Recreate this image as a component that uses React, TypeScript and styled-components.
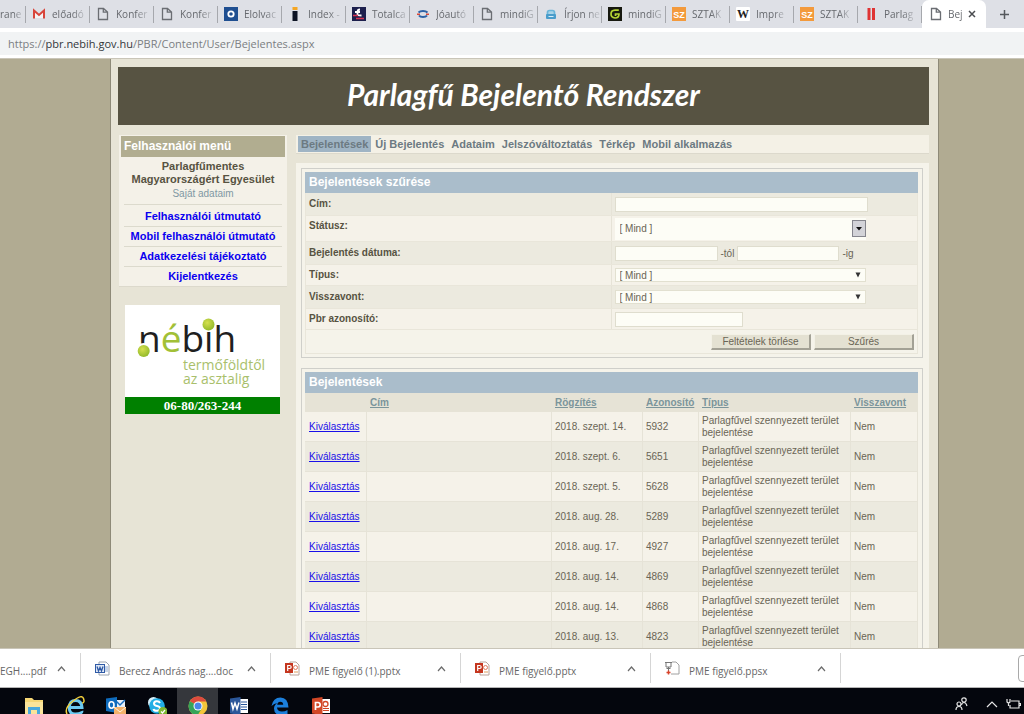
import React from "react";
import styled, { createGlobalStyle, css } from "styled-components";

const GlobalStyle = createGlobalStyle`
  *, *::before, *::after { box-sizing: border-box; }
  body { margin: 0; background: #b1ab92; }
  button, input, select { font: inherit; color: inherit; margin: 0; }
`;

const SANS = `"Liberation Sans", Arial, sans-serif`;
const CHROME = `"Open Sans", "Noto Sans", sans-serif`;

const Window = styled.div`
  display: flex;
  flex-direction: column;
  height: 100vh;
  overflow: hidden;
  font-family: ${CHROME};
`;

/* ---------- browser tabs ---------- */

const TabStrip = styled.nav`
  display: flex;
  flex: none;
  height: 28px;
  background: #dee0e6;
  overflow: hidden;
`;

const Tab = styled.button<{ $active?: boolean; $cut?: boolean }>`
  display: flex;
  align-items: center;
  flex: none;
  width: ${(p) => (p.$cut ? 26 : 64)}px;
  height: 28px;
  padding: 0 0 0 ${(p) => (p.$cut ? 0 : 6)}px;
  border: 0;
  background: transparent;
  color: #66696e;
  font-size: 10px;
  line-height: 16px;
  gap: 6px;
  ${(p) =>
    p.$active
      ? css`
          background: #fff;
          border-radius: 7px 7px 0 0;
          padding-left: 7px;
          gap: 5px;
        `
      : css`
          &::after {
            content: "";
            flex: none;
            width: 1px;
            height: 17px;
            margin-left: auto;
            background: #a6a8ad;
          }
        `}
`;

const TabLabel = styled.span<{ $short?: boolean }>`
  max-width: 36px;
  flex: none;
  margin-right: -6px;
  padding-right: ${(p) => (p.$short ? 6 : 2)}px;
  text-align: left;
  white-space: nowrap;
  mask-image: linear-gradient(to right, #000 60%, rgba(0, 0, 0, 0.15));
`;

const TabIcon = styled.svg`
  flex: none;
  width: 14px;
  height: 14px;
`;

const NewTab = styled.button`
  width: 36px;
  padding: 0;
  border: 0;
  background: transparent;
  display: grid;
  place-items: center;
`;

const AddressBar = styled.div`
  flex: none;
  height: 31px;
  padding: 4px 0;
  background: #fff;
  border-bottom: 1px solid #c9c5b8;
`;

const AddressField = styled.div`
  height: 23px;
  padding-left: 8px;
  background: #f1f3f4;
  color: #7b7e82;
  font-size: 11px;
  line-height: 23px;
  white-space: nowrap;
  b {
    font-weight: 400;
    color: #33363a;
  }
`;

/* ---------- page ---------- */

const Viewport = styled.main`
  flex: 1;
  min-height: 0;
  overflow: hidden;
  padding: 0 85px 0 110px;
  background: #b1ab92;
  font-family: ${SANS};
  font-size: 10px;
  color: #6a6555;
`;

const Sheet = styled.div`
  padding: 8px 9px 8px 7px;
  border-left: 1px solid #8e8a78;
  border-right: 1px solid #8e8a78;
  background: #e7e4d6;
`;

const Banner = styled.header`
  height: 58px;
  display: grid;
  place-items: center;
  background: #575342;
  margin-bottom: 10px;
  h1 {
    margin: 0;
    color: #fff;
    font: italic 700 30px/36px Lato, sans-serif;
    padding-bottom: 4px;
  }
`;

const Columns = styled.div`
  display: flex;
  align-items: flex-start;
  gap: 9px;
`;

const Sidebar = styled.aside`
  flex: none;
  width: 169px;
  padding-left: 1px;
`;

const MenuBox = styled.section`
  padding: 1px 2px 0;
  background: #f4f1e8;
  border-bottom: 1px solid #dcd9cc;
  text-align: center;
`;

const MenuTitle = styled.h2`
  margin: 0;
  padding-left: 3px;
  background: #b1ad90;
  color: #fff;
  font-size: 12px;
  line-height: 21px;
  text-align: left;
`;

const UserBlock = styled.div`
  margin: 0 3px;
  padding: 3px 0;
  border-bottom: 1px solid #dcdacd;
  strong {
    display: block;
    font-size: 11px;
    line-height: 13px;
    color: #575342;
  }
  a {
    display: block;
    color: #8198a3;
    line-height: 15px;
    text-decoration: none;
  }
`;

const MenuLinks = styled.ul`
  list-style: none;
  margin: 0 3px;
  padding: 2px 0 0;
  li + li {
    border-top: 1px solid #dcdacd;
  }
  a {
    display: block;
    color: #0a00f0;
    font-size: 11px;
    font-weight: 700;
    line-height: 19px;
    text-decoration: none;
  }
`;

const LogoCard = styled.figure`
  width: 155px;
  margin: 18px 0 0 6px;
  background: #fff;
  svg {
    display: block;
    width: 155px;
    height: 92px;
  }
  figcaption {
    background: #008000;
    color: #fff;
    text-align: center;
    font: 700 13px/17px "Liberation Serif", "Times New Roman", serif;
  }
`;

const Content = styled.div`
  flex: 1;
  min-width: 0;
`;

const SiteNav = styled.nav`
  display: flex;
  gap: 1px;
  padding: 1px 2px;
  margin-bottom: 9px;
  background: #f4f1e6;
  border-bottom: 1px solid #dcd9cc;
`;

const NavLink = styled.a<{ $current?: boolean }>`
  padding: 0 3px;
  font-size: 11px;
  font-weight: 700;
  line-height: 16px;
  color: #6c7a82;
  text-decoration: none;
  white-space: nowrap;
  background: ${(p) => (p.$current ? "#9fb4c4" : "transparent")};
`;

const Panel = styled.div`
  display: flex;
  flex-direction: column;
  gap: 10px;
  padding: 5px 6px 5px 5px;
  background: #f5f3ea;
`;

const Box = styled.section`
  padding: 3px 4px 3px 3px;
  border: 1px solid #cfcfca;
`;

const BoxTitle = styled.h2`
  margin: 0;
  padding-left: 4px;
  background: #aabdcb;
  color: #fff;
  font-size: 12px;
  line-height: 21px;
`;

/* ---------- filter form ---------- */

const FormRow = styled.div<{ $shade?: boolean; $tall?: boolean }>`
  display: grid;
  grid-template-columns: 1fr 1fr;
  height: ${(p) => (p.$tall ? 26 : p.$shade ? 23 : 21)}px;
  background: ${(p) => (p.$shade ? "#eceadf" : "#f5f2e9")};
  border: solid #e9e6da;
  border-width: 0 1px 1px;
  label {
    padding: ${(p) => (p.$shade ? 5 : 4)}px 3px 0;
    border-right: 1px solid #e6e3d7;
    color: #575342;
    font-weight: 700;
    line-height: 12px;
  }
`;

const Field = styled.div`
  display: flex;
  align-items: center;
  gap: 3px;
  padding: 0 3px;
`;

const TextInput = styled.input<{ $w: number }>`
  width: ${(p) => p.$w}px;
  height: 15px;
  padding: 0 4px;
  border: 1px solid #dfddce;
  background: #fdfdf6;
`;

const SelectWrap = styled.div<{ $combo?: boolean }>`
  position: relative;
  width: 251px;
  select {
    display: block;
    appearance: none;
    width: 100%;
    height: ${(p) => (p.$combo ? 22 : 14)}px;
    border: ${(p) => (p.$combo ? 0 : "1px solid #e2e0d0")};
    padding: 0 4px 0 ${(p) => (p.$combo ? 5 : 4)}px;
    background: #fdfdf6;
    border-radius: 0;
  }
  svg {
    position: absolute;
    pointer-events: none;
    right: ${(p) => (p.$combo ? 0 : 5)}px;
    top: ${(p) => (p.$combo ? 2 : 4)}px;
  }
`;

const Actions = styled.div`
  display: flex;
  justify-content: flex-end;
  gap: 3px;
  padding: 4px 3px 3px;
  border: solid #e9e6da;
  border-width: 0 1px 1px;
`;

const PushButton = styled.button`
  width: 100px;
  height: 16px;
  padding: 0;
  line-height: 12px;
  background: #e4e1d2;
  border: solid;
  border-color: #f3f1e6 #a3a195 #a3a195 #f3f1e6;
  border-width: 1px 2px 2px 1px;
`;

/* ---------- report table ---------- */

const Reports = styled.table`
  width: 100%;
  table-layout: fixed;
  border-collapse: separate;
  border-spacing: 0;
  line-height: 12px;
  th {
    height: 19px;
    padding: 0 3px;
    background: #e6e3d6;
    text-align: left;
  }
  th a {
    color: #7b959b;
  }
  td {
    height: 30px;
    padding: 0 4px 0 3px;
    vertical-align: middle;
    border: solid #e6e3d7;
    border-width: 0 1px 1px 0;
    background: #f5f2e9;
  }
  th:first-child,
  td:first-child {
    padding-left: 4px;
  }
  tbody tr:nth-child(even) td {
    background: #eceadf;
  }
  td a {
    color: #1a10e8;
  }
`;

/* ---------- download shelf and taskbar ---------- */

const Shelf = styled.footer`
  display: flex;
  flex: none;
  align-items: center;
  height: 40px;
  overflow: hidden;
  background: #fff;
  border-top: 1px solid #c9c5b8;
  border-bottom: 1px solid #b5b5b5;
`;

const Download = styled.button<{ $cut?: boolean }>`
  display: flex;
  flex: none;
  align-items: center;
  width: ${(p) => (p.$cut ? 81 : 190)}px;
  height: 30px;
  padding: 6px 14px 0 ${(p) => (p.$cut ? 0 : 14)}px;
  gap: 9px;
  border: 0;
  border-right: 1px solid #d5d5d5;
  background: transparent;
  color: #666;
  font-size: 10px;
  line-height: 16px;
  white-space: nowrap;
  > svg:last-child {
    margin: 0 0 4px auto;
  }
`;

const FileGlyph = styled.svg`
  flex: none;
  width: 15px;
  height: 15px;
  margin-bottom: 5px;
`;

const ShowAll = styled.button`
  flex: none;
  width: 90px;
  height: 27px;
  margin: 0 -84px 0 auto;
  border: 1px solid #a9a9a9;
  border-radius: 4px;
  background: #fff;
`;

const Taskbar = styled.footer`
  display: flex;
  flex: none;
  height: 26px;
  padding: 0 0 0 13px;
  overflow: hidden;
  background: #04060d;
`;

const TaskButton = styled.button<{ $active?: boolean }>`
  flex: none;
  display: flex;
  justify-content: center;
  align-items: flex-start;
  width: 41px;
  height: 34px;
  padding: 8px 0 0;
  border: 0;
  background: ${(p) => (p.$active ? "#35373c" : "transparent")};
  svg {
    width: 20px;
    height: 20px;
  }
`;

const Tray = styled.div`
  display: flex;
  align-items: flex-start;
  gap: 8px;
  margin-left: auto;
  padding: 9px 3px 0 0;
  svg:first-child {
    margin-right: 10px;
  }
`;

/* ---------- drawings ---------- */

const DocIcon = () => (
  <TabIcon viewBox="0 0 14 14" fill="none" stroke="#6b6e73" strokeWidth="1.3">
    <path d="M2.500 1.500h5L11.500 5v7.500h-9zM7.300 1.700v3.500h4" />
  </TabIcon>
);

const SzIcon = () => (
  <TabIcon viewBox="0 0 14 14">
    <rect width="14" height="14" fill="#f39a3c" />
    <text x="7" y="10.500" textAnchor="middle" fontFamily="Liberation Sans" fontWeight="700" fontSize="9" fill="#fff">SZ</text>
  </TabIcon>
);

const MindigIcon = () => (
  <TabIcon viewBox="0 0 14 14">
    <rect width="14" height="14" fill="#17190f" />
    <path d="M10.800 3.200H7Q3 3.500 3 7t4 4q4 0 4-4H7.500v2" fill="none" stroke="#b4d334" strokeWidth="1.700" />
  </TabIcon>
);

const tabs: { label: string; icon: React.ReactNode }[] = [
  {
    label: "előadó",
    icon: (
      <TabIcon viewBox="0 0 14 14">
        <path d="M2.500 11V4L7 8l4.500-4v7" fill="#f4f4f4" />
        <path d="M2 11.500V3.500L7 8l5-4.500v8" fill="none" stroke="#d8453b" strokeWidth="2" />
      </TabIcon>
    ),
  },
  { label: "Konfer", icon: <DocIcon /> },
  { label: "Konfer", icon: <DocIcon /> },
  {
    label: "Elolvac",
    icon: (
      <TabIcon viewBox="0 0 14 14">
        <rect width="14" height="14" fill="#1f4f91" />
        <circle cx="7" cy="7" r="2.700" fill="none" stroke="#fff" strokeWidth="1.800" />
      </TabIcon>
    ),
  },
  {
    label: "Index -",
    icon: (
      <TabIcon viewBox="0 0 14 14">
        <path d="M4.500 0h5v3h-5z" fill="#f5a623" />
        <path d="M4.500 4h5v10h-5z" fill="#0d1424" />
      </TabIcon>
    ),
  },
  {
    label: "Totalca",
    icon: (
      <TabIcon viewBox="0 0 14 14">
        <rect width="14" height="14" fill="#1c1f4d" />
        <path d="M8 2.500Q5.500 2.500 5.500 5v2.500q0 1 4 1M3 5h5" fill="none" stroke="#fff" strokeWidth="1.800" />
        <path d="M1 8.500h5M4 11.500h8" stroke="#d93452" strokeWidth="1.500" />
      </TabIcon>
    ),
  },
  {
    label: "Jóautó",
    icon: (
      <TabIcon viewBox="0 0 14 14" fill="none" strokeWidth="2">
        <path d="M2.500 5.500Q4 4 7 4t4.500 1.500M3 8.500Q4 10 7 10t4-1.500" stroke="#2d62a5" />
        <path d="M1 7.200h3M10 7.200h3" stroke="#d84a3c" strokeWidth="1.500" />
      </TabIcon>
    ),
  },
  { label: "mindiG", icon: <DocIcon /> },
  {
    label: "Írjon ne",
    icon: (
      <TabIcon viewBox="0 0 14 14">
        <path d="M3.500 8V5.500q0-2 2-2h3q2 0 2 2V8" fill="#a9d4e8" stroke="#69b5d9" strokeWidth="1.700" />
        <rect x="2" y="7" width="10" height="5" rx="1" fill="#4a9dcb" />
        <path d="M4.500 9.500h5" stroke="#d9eef7" />
      </TabIcon>
    ),
  },
  { label: "mindiG", icon: <MindigIcon /> },
  { label: "SZTAK", icon: <SzIcon /> },
  {
    label: "Impre",
    icon: (
      <TabIcon viewBox="0 0 14 14">
        <rect width="14" height="14" rx="1" fill="#fff" />
        <text x="7" y="11" textAnchor="middle" fontFamily="Liberation Serif" fontWeight="700" fontSize="12" fill="#222">W</text>
      </TabIcon>
    ),
  },
  { label: "SZTAK", icon: <SzIcon /> },
  {
    label: "Parlag",
    icon: (
      <TabIcon viewBox="0 0 14 14">
        <path d="M3.500 1h3v12h-3zM8 1h3v12H8z" fill="#df3434" />
      </TabIcon>
    ),
  },
];

const Chevron = () => (
  <svg width="9" height="6" viewBox="0 0 9 6" fill="none" stroke="#6b6b6b" strokeWidth="1.200" aria-hidden="true">
    <path d="M1 5l3.500-4L8 5" />
  </svg>
);

const WordFile = () => (
  <FileGlyph viewBox="0 0 15 15">
    <path d="M4 1h7l3 3v10H4z" fill="#fff" stroke="#9aa3b0" />
    <path d="M9 6h4M9 8h4M9 10h4" stroke="#8eaad4" />
    <rect x="0.500" y="3.500" width="9" height="8" fill="#dfe8f5" stroke="#2f5aa6" />
    <path d="M2 5.500l1.500 4.500L5 6.500 6.500 10 8 5.500" fill="none" stroke="#2f5aa6" strokeWidth="1.300" />
  </FileGlyph>
);

const PptFile = () => (
  <FileGlyph viewBox="0 0 15 15">
    <path d="M5 1h6l3 3v10H5z" fill="#fff" stroke="#b9a39a" />
    <circle cx="10.500" cy="6.500" r="2" fill="none" stroke="#dc7a5f" />
    <path d="M9 11h4" stroke="#e0a060" />
    <rect y="2" width="8" height="10" fill="#c5361f" />
    <path d="M2.700 10V4.500h2q1.500.2 1.500 1.500T4.700 7.500h-2" fill="none" stroke="#fff" strokeWidth="1.200" />
  </FileGlyph>
);

const PpsFile = () => (
  <FileGlyph viewBox="0 0 15 15" fill="none">
    <path d="M7 1h4l3 3v9H6" fill="#fff" stroke="#a0a0a0" />
    <path d="M0 1.500h7M1 2v4h5V2M3.500 6v4M1.500 7.500h4" stroke="#777" />
    <path d="M3.500 9.500v4M1.500 11.500h4" stroke="#d9432a" strokeWidth="1.500" />
  </FileGlyph>
);

const NebihLogo = () => (
  <svg viewBox="0 0 155 92" role="img" aria-label="nébih termőföldtől az asztalig">
    <defs>
      <radialGradient id="ball" cx="0.4" cy="0.35" r="0.7">
        <stop offset="0" stopColor="#d5e04f" />
        <stop offset="1" stopColor="#8fb728" />
      </radialGradient>
    </defs>
    <text x="13" y="47" fontFamily="Open Sans" fontSize="37" fill="#1f1f1f">
      n<tspan fill="#a2c037">é</tspan>bih
    </text>
    <circle cx="18.700" cy="45.500" r="7.500" fill="#fff" />
    <circle cx="18.700" cy="46" r="6" fill="url(#ball)" />
    <circle cx="83.500" cy="19.500" r="6" fill="url(#ball)" />
    <g fontFamily="Open Sans" fontSize="14" fill="#a9bf6c">
      <text x="58" y="65">termőföldtől</text>
      <text x="58" y="79">az asztalig</text>
    </g>
  </svg>
);

const TriangleDown = () => (
  <svg width="6" height="6" viewBox="0 0 6 6" aria-hidden="true">
    <path d="M0.500 0.500h5L3 5.500z" fill="#333" />
  </svg>
);

const ComboArrow = () => (
  <svg width="14" height="17" viewBox="0 0 14 17" aria-hidden="true">
    <rect x="0.500" y="0.500" width="13" height="16" fill="#d3d3d8" stroke="#85858d" />
    <path d="M4 7h6l-3 3.500z" fill="#111" />
  </svg>
);

/* ---------- data ---------- */

const navItems = ["Bejelentések", "Új Bejelentés", "Adataim", "Jelszóváltoztatás", "Térkép", "Mobil alkalmazás"];

const menuItems = ["Felhasználói útmutató", "Mobil felhasználói útmutató", "Adatkezelési tájékoztató", "Kijelentkezés"];

const reports: [string, string][] = [
  ["2018. szept. 14.", "5932"],
  ["2018. szept. 6.", "5651"],
  ["2018. szept. 5.", "5628"],
  ["2018. aug. 28.", "5289"],
  ["2018. aug. 17.", "4927"],
  ["2018. aug. 14.", "4869"],
  ["2018. aug. 14.", "4868"],
  ["2018. aug. 13.", "4823"],
];

const columns = ["", "Cím", "Rögzítés", "Azonosító", "Típus", "Visszavont"];

const downloads = [
  { name: "Berecz András nag....doc", icon: <WordFile /> },
  { name: "PME figyelő (1).pptx", icon: <PptFile /> },
  { name: "PME figyelő.pptx", icon: <PptFile /> },
  { name: "PME figyelő.ppsx", icon: <PpsFile /> },
];

const taskIcons: { name: string; art: React.ReactNode; active?: boolean }[] = [
  {
    name: "Explorer",
    art: (
      <>
        <path d="M1 2h7l2 2h9v14H1z" fill="#f6d776" />
        <path d="M1 6h18v12H1z" fill="#fbe49a" />
        <path d="M4 18v-7h12v7h-3v-4H7v4z" fill="#4aa8dc" />
      </>
    ),
  },
  {
    name: "Internet Explorer",
    art: (
      <g fill="none">
        <path d="M4.500 11.500H17Q16.500 4.500 10.500 4.500T4.300 11.500t6.500 6.500 6-3" stroke="#6cc9f0" strokeWidth="3" />
        <path d="M2 18Q-1 12 8 5T18.500 2.500 17 7" stroke="#f2cf3c" strokeWidth="1.500" />
      </g>
    ),
  },
  {
    name: "Outlook",
    art: (
      <>
        <path d="M9 4h10v9H9z" fill="#e8f1fa" />
        <path d="M9 4l5 5 5-5" fill="none" stroke="#1a6fc0" strokeWidth="1.500" />
        <path d="M0 2.500L11 1v16L0 15z" fill="#0f6cbd" />
        <ellipse cx="5.500" cy="9" rx="2.500" ry="3.200" fill="none" stroke="#fff" strokeWidth="1.600" />
        <path d="M8 11h12v9H8z" fill="#f3b26b" />
        <path d="M8 11l6 5 6-5" fill="none" stroke="#fff3e0" />
      </>
    ),
  },
  {
    name: "Skype",
    art: (
      <>
        <circle cx="6.500" cy="6.500" r="5.500" fill="#d9f1fb" />
        <circle cx="10" cy="10" r="7.800" fill="#22aee5" />
        <path d="M13 7q-1-2-3.500-1.800T7 7.500t3 2.500 3 2.500-3 2.300T6.500 13" fill="none" stroke="#fff" strokeWidth="2" />
        <circle cx="16" cy="15.500" r="4.500" fill="#7db832" />
        <path d="M14 15.500l1.500 1.500 2.500-3" fill="none" stroke="#fff" strokeWidth="1.200" />
      </>
    ),
  },
  {
    name: "Chrome",
    active: true,
    art: (
      <>
        <circle cx="10" cy="10" r="9.500" fill="#f4c63a" />
        <path d="M10 10L1.800 5.200A9.500 9.500 0 0 1 18.400 5.600H10z" fill="#dd4b3e" />
        <path d="M10 10L1.800 5.200A9.500 9.500 0 0 0 9.500 19.500L14 12z" fill="#35a45a" />
        <circle cx="10" cy="10" r="4.500" fill="#fff" />
        <circle cx="10" cy="10" r="3.500" fill="#4a86e8" />
      </>
    ),
  },
  {
    name: "Word",
    art: (
      <>
        <path d="M10 3h9v14h-9z" fill="#fff" />
        <path d="M12 6h6M12 8.500h6M12 11h6M12 13.500h6" stroke="#2b579a" />
        <path d="M1 2.500L11.500 1v18L1 17.500z" fill="#2b579a" />
        <path d="M2.500 6.500L4 13l2-6 2 6 2-6.500" fill="none" stroke="#fff" strokeWidth="1.500" />
      </>
    ),
  },
  {
    name: "Edge",
    art: (
      <path
        d="M1.500 10Q3 1.500 10.500 1.500T18.500 11.500H7q.3 4 5 4 3 0 5.500-1.500v4Q15 19.500 11.500 19.500 4 19 4 12.500q0-3.500 3.500-5.500Q4 7.500 1.500 10zM7.200 8.700h6q0-3-3-3-2.500 0-3 3z"
        fill="#1c7fdb"
      />
    ),
  },
  {
    name: "PowerPoint",
    art: (
      <>
        <path d="M10 3h9v14h-9z" fill="#fff" />
        <circle cx="14.500" cy="8" r="2.500" fill="none" stroke="#d24726" strokeWidth="1.300" />
        <path d="M12 12.500h6M12 14.500h6" stroke="#d24726" />
        <path d="M1 2.500L11.500 1v18L1 17.500z" fill="#d24726" />
        <path d="M4.500 14V6.500H7Q9.200 6.700 9.200 8.700T7 11H4.500" fill="none" stroke="#fff" strokeWidth="1.700" />
      </>
    ),
  },
];

export default function App() {
  return (
    <Window>
      <GlobalStyle />
      <TabStrip aria-label="Lapok">
        <Tab $cut>
          <TabLabel>rane</TabLabel>
        </Tab>
        {tabs.map((t, i) => (
          <Tab key={i}>
            {t.icon}
            <TabLabel>{t.label}</TabLabel>
          </Tab>
        ))}
        <Tab $active>
          <DocIcon />
          <TabLabel $short>Bej</TabLabel>
          <svg width="8" height="8" viewBox="0 0 8 8" stroke="#4a4d51" strokeWidth="1.500" aria-hidden="true">
            <path d="M1 1l6 6M7 1L1 7" />
          </svg>
        </Tab>
        <NewTab aria-label="Új lap">
          <svg width="11" height="11" viewBox="0 0 11 11" stroke="#55585d" strokeWidth="1.500" aria-hidden="true">
            <path d="M5.500 1v9M1 5.500h9" />
          </svg>
        </NewTab>
      </TabStrip>
      <AddressBar>
        <AddressField>
          https://<b>pbr.nebih.gov.hu</b>/PBR/Content/User/Bejelentes.aspx
        </AddressField>
      </AddressBar>

      <Viewport>
        <Sheet>
          <Banner>
            <h1>Parlagfű Bejelentő Rendszer</h1>
          </Banner>
          <Columns>
            <Sidebar>
              <MenuBox>
                <MenuTitle>Felhasználói menü</MenuTitle>
                <UserBlock>
                  <strong>Parlagfűmentes Magyarországért Egyesület</strong>
                  <a href="#adataim">Saját adataim</a>
                </UserBlock>
                <MenuLinks>
                  {menuItems.map((m) => (
                    <li key={m}>
                      <a href="#menu">{m}</a>
                    </li>
                  ))}
                </MenuLinks>
              </MenuBox>
              <LogoCard>
                <NebihLogo />
                <figcaption>06-80/263-244</figcaption>
              </LogoCard>
            </Sidebar>

            <Content>
              <SiteNav>
                {navItems.map((n, i) => (
                  <NavLink key={n} href="#nav" $current={i === 0}>
                    {n}
                  </NavLink>
                ))}
              </SiteNav>
              <Panel>
                <Box as="form">
                  <BoxTitle>Bejelentések szűrése</BoxTitle>
                  <FormRow $shade>
                    <label htmlFor="cim">Cím:</label>
                    <Field>
                      <TextInput id="cim" $w={253} />
                    </Field>
                  </FormRow>
                  <FormRow $tall>
                    <label htmlFor="statusz">Státusz:</label>
                    <Field>
                      <SelectWrap $combo>
                        <select id="statusz">
                          <option>[ Mind ]</option>
                        </select>
                        <ComboArrow />
                      </SelectWrap>
                    </Field>
                  </FormRow>
                  <FormRow $shade>
                    <label htmlFor="tol">Bejelentés dátuma:</label>
                    <Field>
                      <TextInput id="tol" $w={103} />
                      <span>-tól</span>
                      <TextInput id="ig" aria-label="Záró dátum" $w={102} />
                      <span>-ig</span>
                    </Field>
                  </FormRow>
                  <FormRow>
                    <label htmlFor="tipus">Típus:</label>
                    <Field>
                      <SelectWrap>
                        <select id="tipus">
                          <option>[ Mind ]</option>
                        </select>
                        <TriangleDown />
                      </SelectWrap>
                    </Field>
                  </FormRow>
                  <FormRow $shade>
                    <label htmlFor="visszavont">Visszavont:</label>
                    <Field>
                      <SelectWrap>
                        <select id="visszavont">
                          <option>[ Mind ]</option>
                        </select>
                        <TriangleDown />
                      </SelectWrap>
                    </Field>
                  </FormRow>
                  <FormRow>
                    <label htmlFor="pbr">Pbr azonosító:</label>
                    <Field>
                      <TextInput id="pbr" $w={128} />
                    </Field>
                  </FormRow>
                  <Actions>
                    <PushButton type="reset">Feltételek törlése</PushButton>
                    <PushButton type="button">Szűrés</PushButton>
                  </Actions>
                </Box>

                <Box>
                  <BoxTitle>Bejelentések</BoxTitle>
                  <Reports>
                    <colgroup>
                      <col width="62" />
                      <col />
                      <col width="91" />
                      <col width="56" />
                      <col width="152" />
                      <col width="67" />
                    </colgroup>
                    <thead>
                      <tr>
                        {columns.map((c) => (
                          <th key={c} scope="col">
                            {c && <a href="#sort">{c}</a>}
                          </th>
                        ))}
                      </tr>
                    </thead>
                    <tbody>
                      {reports.map(([date, id]) => (
                        <tr key={id}>
                          <td>
                            <a href="#select">Kiválasztás</a>
                          </td>
                          <td />
                          <td>{date}</td>
                          <td>{id}</td>
                          <td>Parlagfűvel szennyezett terület bejelentése</td>
                          <td>Nem</td>
                        </tr>
                      ))}
                    </tbody>
                  </Reports>
                </Box>
              </Panel>
            </Content>
          </Columns>
        </Sheet>
      </Viewport>

      <Shelf>
        <Download $cut>
          EGH....pdf
          <Chevron />
        </Download>
        {downloads.map((d) => (
          <Download key={d.name}>
            {d.icon}
            {d.name}
            <Chevron />
          </Download>
        ))}
        <ShowAll aria-label="Összes megjelenítése" />
      </Shelf>

      <Taskbar>
        {taskIcons.map((t) => (
          <TaskButton key={t.name} $active={t.active} aria-label={t.name}>
            <svg viewBox="0 0 20 20">{t.art}</svg>
          </TaskButton>
        ))}
        <Tray>
          <svg width="13" height="14" viewBox="0 0 13 14" fill="none" stroke="#e6e6e6" strokeWidth="1.200">
            <circle cx="9" cy="3" r="2.200" />
            <circle cx="4" cy="7" r="2" />
            <path d="M6.500 8q.5-2.500 2.500-2.500T12 9M1 13q0-3.500 3-3.500T7 13" />
          </svg>
          <svg width="12" height="14" viewBox="0 0 12 14" fill="none" stroke="#e6e6e6" strokeWidth="1.200">
            <path d="M1 10l5-5 5 5" />
          </svg>
          <svg width="15" height="14" viewBox="0 0 15 14" fill="none" stroke="#e6e6e6" strokeWidth="1.200">
            <path d="M5 4h8v7H4V8M13 6.500h1.500v2H13" />
            <path d="M1 2v3q1.500 1.500 3 0V2M2.500 6v3" />
          </svg>
        </Tray>
      </Taskbar>
    </Window>
  );
}
